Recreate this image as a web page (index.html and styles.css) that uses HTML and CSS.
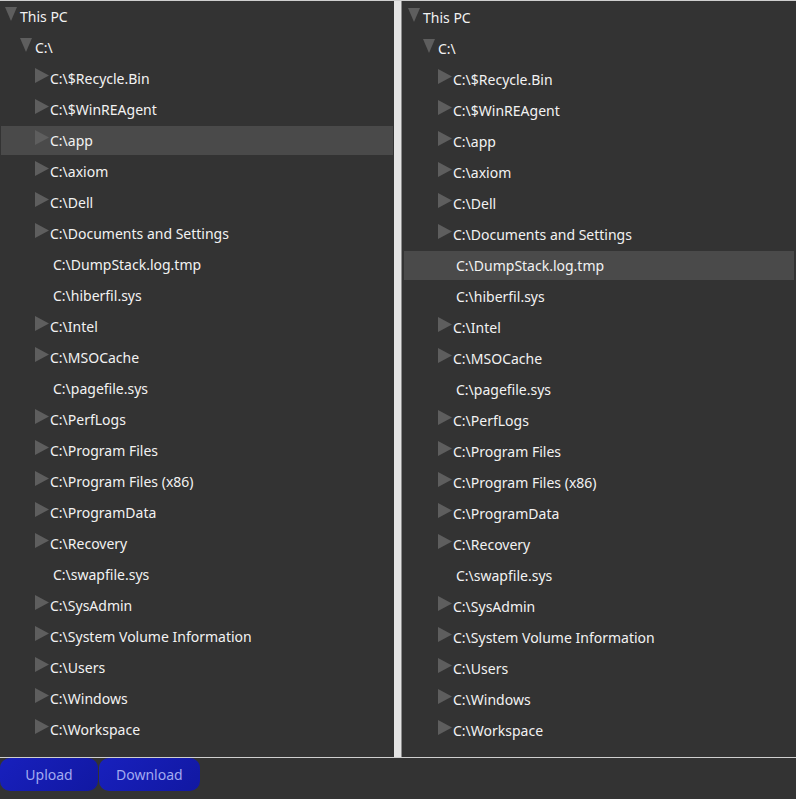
FILE: index.html
```html
<!DOCTYPE html>
<html>
<head>
<meta charset="utf-8">
<link rel="stylesheet" href="styles.css">
</head>
<body>
<div class="split">
  <div class="pane pane-left">
    <div class="tree">
      <div class="row lvl0"><svg class="tri" width="15" height="29"><polygon points="0,5 12,5 6,19"/></svg><span>This PC</span></div>
      <div class="row lvl1"><svg class="tri" width="15" height="29"><polygon points="0,5 12,5 6,19"/></svg><span>C:\</span></div>
      <div class="row lvl2"><svg class="tri" width="15" height="29"><polygon points="0,4 14,11.5 0,19"/></svg><span>C:\$Recycle.Bin</span></div>
      <div class="row lvl2"><svg class="tri" width="15" height="29"><polygon points="0,4 14,11.5 0,19"/></svg><span>C:\$WinREAgent</span></div>
      <div class="row lvl2 selected"><svg class="tri" width="15" height="29"><polygon points="0,4 14,11.5 0,19"/></svg><span>C:\app</span></div>
      <div class="row lvl2"><svg class="tri" width="15" height="29"><polygon points="0,4 14,11.5 0,19"/></svg><span>C:\axiom</span></div>
      <div class="row lvl2"><svg class="tri" width="15" height="29"><polygon points="0,4 14,11.5 0,19"/></svg><span>C:\Dell</span></div>
      <div class="row lvl2"><svg class="tri" width="15" height="29"><polygon points="0,4 14,11.5 0,19"/></svg><span>C:\Documents and Settings</span></div>
      <div class="row lvl2"><span class="leaf"></span><span>C:\DumpStack.log.tmp</span></div>
      <div class="row lvl2"><span class="leaf"></span><span>C:\hiberfil.sys</span></div>
      <div class="row lvl2"><svg class="tri" width="15" height="29"><polygon points="0,4 14,11.5 0,19"/></svg><span>C:\Intel</span></div>
      <div class="row lvl2"><svg class="tri" width="15" height="29"><polygon points="0,4 14,11.5 0,19"/></svg><span>C:\MSOCache</span></div>
      <div class="row lvl2"><span class="leaf"></span><span>C:\pagefile.sys</span></div>
      <div class="row lvl2"><svg class="tri" width="15" height="29"><polygon points="0,4 14,11.5 0,19"/></svg><span>C:\PerfLogs</span></div>
      <div class="row lvl2"><svg class="tri" width="15" height="29"><polygon points="0,4 14,11.5 0,19"/></svg><span>C:\Program Files</span></div>
      <div class="row lvl2"><svg class="tri" width="15" height="29"><polygon points="0,4 14,11.5 0,19"/></svg><span>C:\Program Files (x86)</span></div>
      <div class="row lvl2"><svg class="tri" width="15" height="29"><polygon points="0,4 14,11.5 0,19"/></svg><span>C:\ProgramData</span></div>
      <div class="row lvl2"><svg class="tri" width="15" height="29"><polygon points="0,4 14,11.5 0,19"/></svg><span>C:\Recovery</span></div>
      <div class="row lvl2"><span class="leaf"></span><span>C:\swapfile.sys</span></div>
      <div class="row lvl2"><svg class="tri" width="15" height="29"><polygon points="0,4 14,11.5 0,19"/></svg><span>C:\SysAdmin</span></div>
      <div class="row lvl2"><svg class="tri" width="15" height="29"><polygon points="0,4 14,11.5 0,19"/></svg><span>C:\System Volume Information</span></div>
      <div class="row lvl2"><svg class="tri" width="15" height="29"><polygon points="0,4 14,11.5 0,19"/></svg><span>C:\Users</span></div>
      <div class="row lvl2"><svg class="tri" width="15" height="29"><polygon points="0,4 14,11.5 0,19"/></svg><span>C:\Windows</span></div>
      <div class="row lvl2"><svg class="tri" width="15" height="29"><polygon points="0,4 14,11.5 0,19"/></svg><span>C:\Workspace</span></div>
    </div>
  </div>
  <div class="splitter"></div>
  <div class="pane pane-right">
    <div class="tree">
      <div class="row lvl0"><svg class="tri" width="15" height="29"><polygon points="0,5 12,5 6,19"/></svg><span>This PC</span></div>
      <div class="row lvl1"><svg class="tri" width="15" height="29"><polygon points="0,5 12,5 6,19"/></svg><span>C:\</span></div>
      <div class="row lvl2"><svg class="tri" width="15" height="29"><polygon points="0,4 14,11.5 0,19"/></svg><span>C:\$Recycle.Bin</span></div>
      <div class="row lvl2"><svg class="tri" width="15" height="29"><polygon points="0,4 14,11.5 0,19"/></svg><span>C:\$WinREAgent</span></div>
      <div class="row lvl2"><svg class="tri" width="15" height="29"><polygon points="0,4 14,11.5 0,19"/></svg><span>C:\app</span></div>
      <div class="row lvl2"><svg class="tri" width="15" height="29"><polygon points="0,4 14,11.5 0,19"/></svg><span>C:\axiom</span></div>
      <div class="row lvl2"><svg class="tri" width="15" height="29"><polygon points="0,4 14,11.5 0,19"/></svg><span>C:\Dell</span></div>
      <div class="row lvl2"><svg class="tri" width="15" height="29"><polygon points="0,4 14,11.5 0,19"/></svg><span>C:\Documents and Settings</span></div>
      <div class="row lvl2 selected"><span class="leaf"></span><span>C:\DumpStack.log.tmp</span></div>
      <div class="row lvl2"><span class="leaf"></span><span>C:\hiberfil.sys</span></div>
      <div class="row lvl2"><svg class="tri" width="15" height="29"><polygon points="0,4 14,11.5 0,19"/></svg><span>C:\Intel</span></div>
      <div class="row lvl2"><svg class="tri" width="15" height="29"><polygon points="0,4 14,11.5 0,19"/></svg><span>C:\MSOCache</span></div>
      <div class="row lvl2"><span class="leaf"></span><span>C:\pagefile.sys</span></div>
      <div class="row lvl2"><svg class="tri" width="15" height="29"><polygon points="0,4 14,11.5 0,19"/></svg><span>C:\PerfLogs</span></div>
      <div class="row lvl2"><svg class="tri" width="15" height="29"><polygon points="0,4 14,11.5 0,19"/></svg><span>C:\Program Files</span></div>
      <div class="row lvl2"><svg class="tri" width="15" height="29"><polygon points="0,4 14,11.5 0,19"/></svg><span>C:\Program Files (x86)</span></div>
      <div class="row lvl2"><svg class="tri" width="15" height="29"><polygon points="0,4 14,11.5 0,19"/></svg><span>C:\ProgramData</span></div>
      <div class="row lvl2"><svg class="tri" width="15" height="29"><polygon points="0,4 14,11.5 0,19"/></svg><span>C:\Recovery</span></div>
      <div class="row lvl2"><span class="leaf"></span><span>C:\swapfile.sys</span></div>
      <div class="row lvl2"><svg class="tri" width="15" height="29"><polygon points="0,4 14,11.5 0,19"/></svg><span>C:\SysAdmin</span></div>
      <div class="row lvl2"><svg class="tri" width="15" height="29"><polygon points="0,4 14,11.5 0,19"/></svg><span>C:\System Volume Information</span></div>
      <div class="row lvl2"><svg class="tri" width="15" height="29"><polygon points="0,4 14,11.5 0,19"/></svg><span>C:\Users</span></div>
      <div class="row lvl2"><svg class="tri" width="15" height="29"><polygon points="0,4 14,11.5 0,19"/></svg><span>C:\Windows</span></div>
      <div class="row lvl2"><svg class="tri" width="15" height="29"><polygon points="0,4 14,11.5 0,19"/></svg><span>C:\Workspace</span></div>
    </div>
  </div>
</div>
<div class="actions">
  <button class="btn">Upload</button>
  <button class="btn">Download</button>
</div>
</body>
</html>
```
FILE: styles.css
```css
html, body {
  margin: 0;
  padding: 0;
}
body {
  background: #333333;
  width: 796px;
  height: 799px;
  overflow: hidden;
  font-family: "Noto Sans", "Open Sans", sans-serif;
  font-size: 14px;
  color: #f2f2f2;
}
.split {
  display: flex;
  height: 756px;
  border-top: 1px solid #cfcfcf;
  border-bottom: 1px solid #cfcfcf;
}
.pane {
  background: #333333;
  overflow: hidden;
}
.pane-left {
  width: 394px;
  flex: none;
}
.splitter {
  width: 7px;
  flex: none;
  background: #e4e4e4;
  border-right: 1px solid #8c8c8c;
}
.pane-right {
  flex: 1;
  padding: 1px;
}
.tree {
  display: flex;
  flex-direction: column;
}
.row {
  display: flex;
  align-items: center;
  height: 29px;
  margin: 1px;
  white-space: nowrap;
}
.row.selected {
  background: #4a4a4a;
}
.lvl0 { padding-left: 4px; }
.lvl1 { padding-left: 19px; }
.lvl2 { padding-left: 34px; }
.tri {
  flex: none;
  align-self: flex-start;
  fill: #5e5e5e;
}
.leaf {
  display: inline-block;
  width: 18px;
  flex: none;
}
.actions {
  display: flex;
  gap: 1px;
  padding-top: 0;
}
.btn {
  min-width: 98px;
  height: 33px;
  padding: 0 17px;
  border: none;
  border-radius: 10px;
  background: linear-gradient(135deg, #1820bd, #1118a2);
  color: #a3aaf0;
  font-family: "Noto Sans", "Open Sans", sans-serif;
  font-size: 14px;
}
```
